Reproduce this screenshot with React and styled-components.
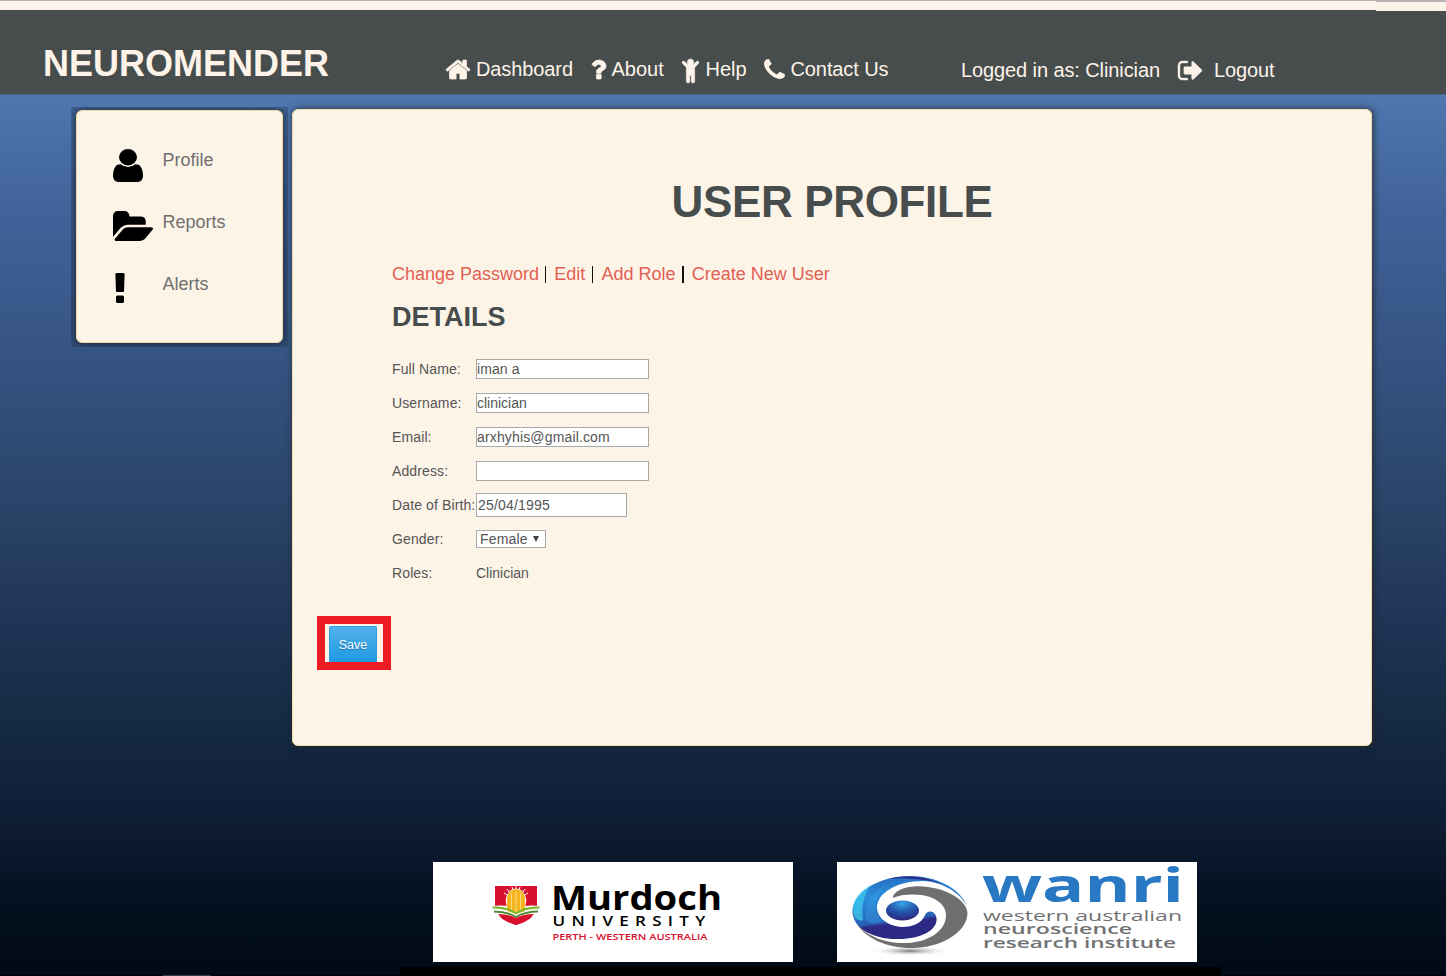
import React from "react";
import styled, { createGlobalStyle } from "styled-components";

const Global = createGlobalStyle`
  * { box-sizing: border-box; }
  body {
    margin: 0;
    font-family: "Liberation Sans", Arial, sans-serif;
    background: #000914;
  }
`;

const Page = styled.div`
  width: 1446px;
  height: 976px;
  overflow: hidden;
  display: flex;
  flex-direction: column;
  background:
    linear-gradient(90deg, #000 163px, #3a3c42 163px, #3a3c42 211px, #000 211px) 0 975px / 100% 1px no-repeat,
    linear-gradient(#4f77b0 94px, #41639a 210px, #365585 347px, #2a4569 500px, #22375a 600px, #162a44 720px, #0d1c33 830px, #051020 900px, #000a16 976px);
`;

const TopStrip = styled.div`
  flex: none;
  display: flex;
  height: 10px;
  background: #474c4d;
`;

const StripPart = styled.div`
  width: ${(p) => p.$width}px;
  height: 10px;
  background: #fdf3e8;
  border-top: ${(p) => p.$line}px solid #b9b3b3;
`;

const Header = styled.header`
  flex: none;
  height: 85px;
  background: linear-gradient(#fdf3e8, #fdf3e8) 1376px 0 / 70px 1px no-repeat, #474c4d;
  border-bottom: 1px solid #48648d;
  display: flex;
  align-items: flex-start;
  color: #fdf3e8;
`;

const Brand = styled.h1`
  margin: 33px 0 0 43px;
  width: 403px;
  font-size: 36px;
  line-height: 42px;
  font-weight: bold;
`;

const Nav = styled.nav`
  display: flex;
  width: 515px;
  margin-top: 47px;
`;

const NavLink = styled.a`
  display: flex;
  width: ${(p) => p.$width}px;
  height: 24px;
  font-size: 20px;
  line-height: 24px;
  white-space: nowrap;
  letter-spacing: ${(p) => p.$track || 0}px;
`;

const IconSlot = styled.span`
  flex: none;
  width: ${(p) => p.$width}px;
  padding-top: ${(p) => p.$top || 0}px;
  svg { display: block; }
`;

const Account = styled.div`
  display: flex;
  margin-top: 48px;
`;

const Main = styled.main`
  flex: none;
  display: flex;
  align-items: flex-start;
  height: 767px;
  padding: 12px 0 0 71px;
`;

const SideFrame = styled.div`
  width: 217px;
  height: 240px;
  padding: 3px 5px 4px;
  margin-right: 4px;
  overflow: hidden;
  background: rgba(37, 50, 75, 0.3);
`;

const Sidebar = styled.aside`
  height: 233px;
  padding: 34px 0 0 36px;
  border: 1px solid #f5d5a0;
  border-radius: 6px;
  background: #fdf4e8;
  box-shadow: 0 0 6px 1px rgba(20, 30, 45, 0.65);
`;

const SideItem = styled.a`
  display: flex;
  height: 62px;
  color: #6f6f6f;
  font-size: 18px;
  line-height: 30px;
`;

const Panel = styled.section`
  width: 1080px;
  height: 637px;
  margin-top: 2px;
  border: 1px solid #f3dbb0;
  border-radius: 6px;
  background: #fdf4e8;
  box-shadow: 1px 0 6px 1px rgba(35, 40, 42, 0.7);
`;

const Title = styled.h2`
  margin: 67px 0 0;
  text-align: center;
  font-size: 44px;
  line-height: 50px;
  letter-spacing: -0.35px;
  color: #474c4d;
`;

const Actions = styled.div`
  display: flex;
  margin: 35px 0 0 99px;
  font-size: 18px;
  line-height: 24px;
  color: #000;
`;

const ActionLink = styled.a`
  color: #e25f54;
  width: ${(p) => p.$width}px;
  white-space: nowrap;
`;

const Divider = styled.span`
  width: 1.5px;
  height: 17px;
  margin: 4px 8px 0 5px;
  background: #111;
`;

const Subtitle = styled.h3`
  margin: 15px 0 0 99px;
  font-size: 27px;
  line-height: 32px;
  color: #474c4d;
`;

const Form = styled.div`
  margin: 19px 0 0 99px;
  color: #555;
  font-size: 14px;
`;

const Row = styled.div`
  display: flex;
  align-items: center;
  height: 34px;
`;

const Label = styled.label`
  width: 84px;
  white-space: nowrap;
  letter-spacing: 0.12px;
`;

const Field = styled.input`
  width: ${(p) => p.$width || 173}px;
  height: ${(p) => p.$height || 20}px;
  padding: 0 1px;
  padding-left: ${(p) => p.$inset || 0}px;
  border: 1px solid #a9a9a9;
  background: #fff;
  color: #555;
  font: 14px "Liberation Sans", Arial, sans-serif;
  letter-spacing: ${(p) => p.$track || 0}px;
`;

const Select = styled.button`
  display: flex;
  align-items: center;
  width: 70px;
  height: 18px;
  padding: 0 0 0 3px;
  border: 1px solid #a9a9a9;
  background: #fff;
  color: #555;
  font: 14px "Liberation Sans", Arial, sans-serif;
  letter-spacing: 0.15px;
  svg { margin: 0 0 0 5px; }
`;

const SaveMark = styled.div`
  width: 74px;
  height: 54px;
  margin: 26px 0 0 24px;
  padding: 2px 4px 0;
  border: 8px solid #ed1c24;
`;

const SaveButton = styled.button`
  display: block;
  width: 48px;
  height: 36px;
  padding: 0;
  border: 1px solid #2f9be0;
  border-bottom: 0;
  border-radius: 2px 2px 0 0;
  background: linear-gradient(#52b0ea, #1f9ae3);
  color: #fff;
  font: 12.5px "Liberation Sans", Arial, sans-serif;
  text-shadow: 0 1px 1px rgba(0, 60, 110, 0.5);
`;

const Footer = styled.footer`
  flex: none;
  display: flex;
  gap: 44px;
  width: 821px;
  height: 114px;
  margin-left: 400px;
  padding-left: 33px;
  border-bottom: 9px solid #000;
`;

const LogoCard = styled.div`
  width: 360px;
  height: 100px;
  background: #fff;
  svg { display: block; }
`;

const shapes = {
  home: {
    box: "87 253 1618 1283",
    weight: 50,
    d: "M1472 992v480q0 26-19 45t-45 19h-384v-384h-256v384h-384q-26 0-45-19t-19-45v-480q0-1 .5-3t.5-3l575-474 575 474q1 2 1 6zm223-69l-62 74q-8 9-21 11h-3q-13 0-21-7l-692-577-692 577q-12 8-24 7-13-2-21-11l-62-74q-8-10-7-23.5t11-21.5l719-599q32-26 76-26t76 26l244 204v-195q0-14 9-23t23-9h192q14 0 23 9t9 23v408l219 182q10 8 11 21.5t-7 23.5z",
  },
  question: {
    box: "479 256 925 1280",
    weight: 50,
    d: "M1088 1256v240q0 16-12 28t-28 12h-240q-16 0-28-12t-12-28v-240q0-16 12-28t28-12h240q16 0 28 12t12 28zm316-600q0 54-15.5 101t-35 76.5-55 59.5-57.5 43.5-61 35.5q-41 23-68.5 65t-27.5 67q0 17-12 32.5t-28 15.5h-240q-15 0-25.5-18.5t-10.5-37.5v-45q0-83 65-156.5t143-108.5q59-27 84-56t25-76q0-42-46.5-74t-107.5-32q-65 0-108 29-35 25-107 115-13 16-31 16-12 0-25-8l-164-125q-13-10-15.5-25t5.5-28q160-266 464-266 80 0 161 31t146 83 106 127.5 41 158.5z",
  },
  child: {
    box: "0 0 17 24",
    weight: 0.5,
    d: "M8.5 0a3.300 3.300 0 0 1 2.400 5.600h.4L14.500 2.500a1.350 1.350 0 0 1 2 1.900L12.700 8.500V22.300a1.750 1.750 0 0 1-3.500 0V16.500H7.800V22.300a1.750 1.750 0 0 1-3.500 0V8.500L.5 4.400a1.350 1.350 0 0 1 2-1.900L5.700 5.600h.4A3.300 3.300 0 0 1 8.500 0z",
  },
  phone: {
    box: "192 128 1408 1408",
    d: "M1600 1240q0 27-10 70.5t-21 68.5q-21 50-122 106-94 51-186 51-27 0-53-3.5t-57.5-12.5-47-14.5-55.5-20.5-49-18q-98-35-175-83-127-79-264-216t-216-264q-48-77-83-175-3-9-18-49t-20.5-55.5-14.5-47-12.5-57.5-3.5-53q0-92 51-186 56-101 106-122 25-11 68.5-21t70.5-10q14 0 21 3 18 6 53 76 11 19 30 54t35 63.5 31 53.5q3 4 17.5 25t21.5 35.5 7 28.5q0 20-28.5 50t-62 55-62 53-28.5 46q0 9 5 22.5t8.5 20.5 14 24 11.5 19q76 137 174 235t235 174q2 1 19 11.5t24 14 20.5 8.5 22.5 5q18 0 46-28.5t53-62 55-62 50-28.5q14 0 28.5 7t35.5 21.5 25 17.5q25 15 53.5 31t63.5 35 54 30q70 35 76 53 3 7 3 21z",
  },
  signOut: {
    box: "64 256 1568 1280",
    weight: 30,
    d: "M704 1440q0 4 1 20t.5 26.5-3 23.5-10 19.5-20.5 6.5h-320q-119 0-203.5-84.5t-84.5-203.5v-704q0-119 84.5-203.5t203.5-84.5h320q13 0 22.5 9.5t9.5 22.5q0 4 1 20t.5 26.5-3 23.5-10 19.5-20.5 6.5h-320q-66 0-113 47t-47 113v704q0 66 47 113t113 47h312l11.5 1 11.5 3 8 5.5 7 9 2 13.5zm928-544q0 26-19 45l-544 544q-19 19-45 19t-45-19-19-45v-288h-448q-26 0-45-19t-19-45v-384q0-26 19-45t45-19h448v-288q0-26 19-45t45-19 45 19l544 544q19 19 19 45z",
  },
  user: {
    box: "256 128 1280 1536",
    d: "M1536 1399q0 109-62.5 187t-150.5 78h-854q-88 0-150.5-78t-62.5-187q0-85 8.5-160.5t31.5-152 58.5-131 94-89 134.5-34.5q131 128 313 128t313-128q76 0 134.5 34.5t94 89 58.5 131 31.5 152 8.5 160.5zm-256-887q0 159-112.5 271.5t-271.5 112.5-271.5-112.5-112.5-271.5 112.5-271.5 271.5-112.5 271.5 112.5 112.5 271.5z",
  },
  folder: {
    box: "64 128 1879 1408",
    d: "M1943 952q0 31-31 66l-336 396q-43 51-120.5 86.5t-143.5 35.5h-1088q-34 0-60.5-13t-26.5-43q0-31 31-66l336-396q43-51 120.5-86.5t143.500-35.5h1088q34 0 60.5 13t26.5 43zm-343-344v160h-832q-94 0-197 47.5t-164 119.5l-337 396-5 6q0-4-.5-12.5t-.5-12.5v-960q0-92 66-158t158-66h320q92 0 158 66t66 158v32h544q92 0 158 66t66 158z",
  },
  exclamation: {
    box: "656 128 480 1408",
    d: "M1088 1248v224q0 26-19 45t-45 19h-256q-26 0-45-19t-19-45v-224q0-26 19-45t45-19h256q26 0 45 19t19 45zm30-1056l-28 768q-1 26-20.5 45t-45.5 19h-256q-26 0-45.5-19t-20.5-45l-28-768q-1-26 17.5-45t44.5-19h320q26 0 44.5 19t17.5 45z",
  },
};

function Icon({ name, width, height }) {
  const s = shapes[name];
  return (
    <svg
      width={width}
      height={height}
      viewBox={s.box}
      preserveAspectRatio="none"
      overflow="visible"
      fill="currentColor"
      stroke="currentColor"
      strokeWidth={s.weight || 0}
    >
      <path d={s.d} />
    </svg>
  );
}

const SideIcon = styled(IconSlot)`
  color: #000;
  padding-left: ${(p) => p.$left || 0}px;
`;

function MurdochLogo() {
  return (
    <svg width="360" height="100" viewBox="0 0 360 100">
      <path d="M62 24h42v24q-1 8-21 15q-20-7-21-15z" fill="#d90f2e" />
      <path d="M59 44q15-2 24 3q9-5 24-3l-3 11q-10 0-21 3q-11-3-21-3z" fill="#fff" />
      <ellipse cx="83" cy="39" rx="10.2" ry="12.5" fill="#fff" />
      <path d="M71 31l3 2M74 27l2 3M79 25l1 3M83 24v3M87 25l-1 3M92 27l-2 3M95 31l-3 2" stroke="#fff" />
      <path d="M74 49V36q1-8 9-9q8 1 9 9v13l-9 3z" fill="#f6b51e" />
      <path d="M78.500 50V31M83 51V29M87.500 50V31" stroke="#fbdc82" strokeWidth="1" />
      <path d="M59.500 44.500q15-1 23.500 6q8.500-7 23.500-6v2q-15 0-23.500 6q-8.500-6-23.500-6z" fill="#79b92b" />
      <path d="M61 48.500q13 0 22 5.500q9-5.500 22-5.500v2q-13 0-22 5.500q-9-5.500-22-5.500z" fill="#4f8b31" />
      <path d="M65 52q11 0 18 4q7-4 18-4q-6 8-18 11q-12-3-18-11z" fill="#d90f2e" />
      <g fontFamily='"Open Sans", sans-serif'>
        <text x="118" y="48" fontSize="33.5" fontWeight="700" fill="#000" textLength="171" lengthAdjust="spacingAndGlyphs">Murdoch</text>
        <text x="119.500" y="63.500" fontSize="13.500" fontWeight="600" fill="#000" letterSpacing="5" textLength="159" lengthAdjust="spacingAndGlyphs">UNIVERSITY</text>
        <text x="119.500" y="77.500" fontSize="9.500" fontWeight="600" fill="#d90f2e" textLength="155" lengthAdjust="spacingAndGlyphs">PERTH - WESTERN AUSTRALIA</text>
      </g>
    </svg>
  );
}

function WanriLogo() {
  return (
    <svg width="360" height="100" viewBox="0 0 360 100">
      <defs>
        <linearGradient id="swirl" x1="0" y1="0" x2="0.25" y2="1">
          <stop offset="0" stopColor="#2463b9" />
          <stop offset="0.35" stopColor="#2b8ddb" />
          <stop offset="0.75" stopColor="#2761b6" />
          <stop offset="0.8" stopColor="#2c2a85" />
          <stop offset="1" stopColor="#2c2a85" />
        </linearGradient>
        <radialGradient id="pupil" cx="0.5" cy="0.15" r="0.8">
          <stop offset="0" stopColor="#38a5e5" />
          <stop offset="0.55" stopColor="#2353aa" />
          <stop offset="1" stopColor="#2c2a85" />
        </radialGradient>
        <radialGradient id="ground">
          <stop offset="0" stopColor="#777" />
          <stop offset="1" stopColor="#fff" stopOpacity="0" />
        </radialGradient>
      </defs>
      <ellipse cx="73" cy="89" rx="40" ry="5" fill="url(#ground)" />
      <path d="M56 36C56 27 75 22 91 25C114 28 130 40 130.500 51C130 71 103 86 75 86C49 86 27 76 18 59C28 74 48 82 70 81C94 80 110 67 109 52C108 41 97 35 85 33C75 32 64 32 56 36z" fill="#706e6f" />
      <path d="M130 44C123 26 99 14 73 14C41 14 15 31 15.500 50C16 67 38 78 62 77C84 77 101 68 99.500 56C98 48 90 48 88 53C85 61 76 65 65 65C51 64 40 56 40 45C41 30 61 19 86 19C107 20 123 31 130 44z" fill="url(#swirl)" />
      <path d="M50 17Q76 11 100 20Q120 27 130 44Q119 25 94 19Q70 15 50 17z" fill="#2c2a85" />
      <path d="M17 54Q12 35 35 22Q23 36 26 58Q21 60 17 54z" fill="#43dcf4" opacity=".6" />
      <path d="M28 57Q28 33 51 22Q39 31 39 43Q39 53 46 59Q34 65 28 57z" fill="#37a0e5" opacity=".4" />
      <ellipse cx="65.500" cy="48.500" rx="16.500" ry="10" fill="url(#pupil)" />
      <g fontFamily='"Open Sans", sans-serif' fill="#717173">
        <text x="145" y="40" fontSize="46" fontWeight="700" fill="#2878c3" textLength="202" lengthAdjust="spacingAndGlyphs">wanri</text>
        <text x="146" y="58.500" fontSize="14" textLength="199" lengthAdjust="spacingAndGlyphs">western australian</text>
        <text x="146" y="72" fontSize="14" fontWeight="600" textLength="149" lengthAdjust="spacingAndGlyphs">neuroscience</text>
        <text x="146" y="85.500" fontSize="14" fontWeight="600" textLength="193" lengthAdjust="spacingAndGlyphs">research institute</text>
      </g>
    </svg>
  );
}

export default function App() {
  return (
    <Page>
      <Global />
      <TopStrip>
        <StripPart $width={1376} $line={1} />
        <StripPart $width={70} $line={2} />
      </TopStrip>
      <Header>
        <Brand>NEUROMENDER</Brand>
        <Nav>
          <NavLink $width={146} $track={-0.1}><IconSlot $width={30} $top={3}><Icon name="home" width={24} height={19} /></IconSlot>Dashboard</NavLink>
          <NavLink $width={90}><IconSlot $width={19.5} $top={3}><Icon name="question" width={14} height={19} /></IconSlot>About</NavLink>
          <NavLink $width={82}><IconSlot $width={23.5} $top={2}><Icon name="child" width={17} height={24} /></IconSlot>Help</NavLink>
          <NavLink $width={140} $track={-0.1}><IconSlot $width={26.5} $top={2}><Icon name="phone" width={21} height={20} /></IconSlot>Contact Us</NavLink>
        </Nav>
        <Account>
          <NavLink $width={217} $track={-0.1}>Logged in as: Clinician</NavLink>
          <NavLink $width={110} $track={-0.1}><IconSlot $width={36} $top={3}><Icon name="signOut" width={24} height={19} /></IconSlot>Logout</NavLink>
        </Account>
      </Header>
      <Main>
        <SideFrame>
          <Sidebar>
            <SideItem><SideIcon $width={49.5} $top={4}><Icon name="user" width={30} height={33} /></SideIcon>Profile</SideItem>
            <SideItem><SideIcon $width={49.5} $top={4}><Icon name="folder" width={40} height={30} /></SideIcon>Reports</SideItem>
            <SideItem><SideIcon $width={49.5} $top={4} $left={2}><Icon name="exclamation" width={10} height={30} /></SideIcon>Alerts</SideItem>
          </Sidebar>
        </SideFrame>
        <Panel>
          <Title>USER PROFILE</Title>
          <Actions>
            <ActionLink $width={147.8}>Change Password</ActionLink><Divider />
            <ActionLink $width={32.6}>Edit</ActionLink><Divider />
            <ActionLink $width={75.8}>Add Role</ActionLink><Divider />
            <ActionLink $width={140}>Create New User</ActionLink>
          </Actions>
          <Subtitle>DETAILS</Subtitle>
          <Form>
            <Row><Label>Full Name:</Label><Field defaultValue="iman a" $track={0.1} /></Row>
            <Row><Label>Username:</Label><Field defaultValue="clinician" /></Row>
            <Row><Label>Email:</Label><Field defaultValue="arxhyhis@gmail.com" $track={0.15} /></Row>
            <Row><Label>Address:</Label><Field defaultValue="" /></Row>
            <Row><Label>Date of Birth:</Label><Field $width={151} $height={24} $inset={1} $track={0.2} defaultValue="25/04/1995" /></Row>
            <Row><Label>Gender:</Label><Select>Female<svg width="6" height="6" viewBox="0 0 6 6"><path d="M0 0h6L3 6z" fill="#444" /></svg></Select></Row>
            <Row><Label>Roles:</Label><span>Clinician</span></Row>
          </Form>
          <SaveMark><SaveButton>Save</SaveButton></SaveMark>
        </Panel>
      </Main>
      <Footer>
        <LogoCard><MurdochLogo /></LogoCard>
        <LogoCard><WanriLogo /></LogoCard>
      </Footer>
    </Page>
  );
}
